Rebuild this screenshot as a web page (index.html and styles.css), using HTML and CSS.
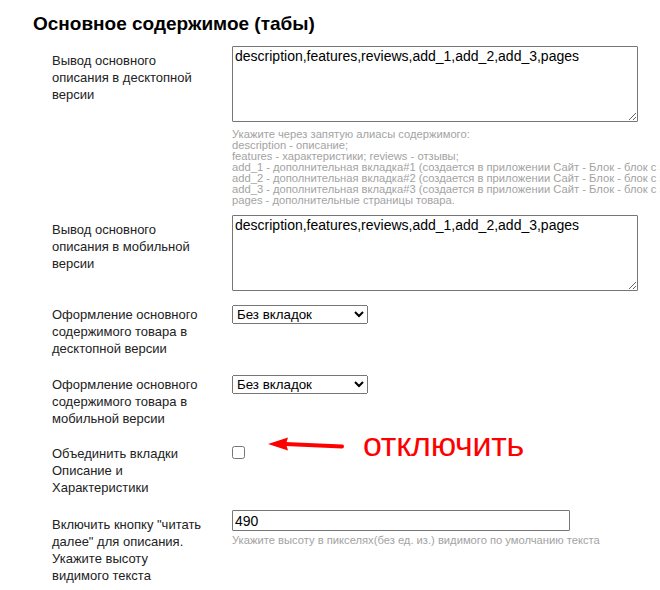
FILE: index.html
```html
<!DOCTYPE html>
<html lang="ru">
  <head>
    <meta charset="UTF-8" />
    <meta name="viewport" content="width=device-width, initial-scale=1.0" />
    <title>Основное содержимое</title>
    <link rel="stylesheet" href="styles.css">
  </head>
  <body>
    <div class="page">
      <h2 class="section-title">Основное содержимое (табы)</h2>

      <div class="settings">
        <div class="row row--hint">
          <div class="row-label row-label--text">Вывод основного описания в десктопной версии</div>
          <div class="row-field">
            <textarea class="field-area">description,features,reviews,add_1,add_2,add_3,pages</textarea>
            <div class="hint">
              Укажите через запятую алиасы содержимого:<br>
              description - описание;<br>
              features - характеристики; reviews - отзывы;<br>
              add_1 - дополнительная вкладка#1 (создается в приложении Сайт - Блок - блок с заданным id);<br>
              add_2 - дополнительная вкладка#2 (создается в приложении Сайт - Блок - блок с заданным id);<br>
              add_3 - дополнительная вкладка#3 (создается в приложении Сайт - Блок - блок с заданным id);<br>
              pages - дополнительные страницы товара.
            </div>
          </div>
        </div>

        <div class="row">
          <div class="row-label row-label--text">Вывод основного описания в мобильной версии</div>
          <div class="row-field">
            <textarea class="field-area">description,features,reviews,add_1,add_2,add_3,pages</textarea>
          </div>
        </div>

        <div class="row row--select">
          <div class="row-label row-label--select">Оформление основного содержимого товара в десктопной версии</div>
          <div class="row-field">
            <select class="field-select">
              <option>Без вкладок</option>
              <option>Вкладки</option>
            </select>
          </div>
        </div>

        <div class="row row--select">
          <div class="row-label row-label--select">Оформление основного содержимого товара в мобильной версии</div>
          <div class="row-field">
            <select class="field-select">
              <option>Без вкладок</option>
              <option>Вкладки</option>
            </select>
          </div>
        </div>

        <div class="row">
          <div class="row-label">Объединить вкладки Описание и Характеристики</div>
          <div class="row-field">
            <input type="checkbox" class="field-check" />
            <!-- пометка поверх скриншота -->
            <div class="annotation">
              <svg class="annotation-arrow" width="80" height="20" viewBox="0 0 80 20">
                <line x1="20" y1="10" x2="77" y2="12.5" stroke="#f00" stroke-width="4" stroke-linecap="round" />
                <polygon points="3,10 23,3.5 21,10 23,16.5" fill="#f00" />
              </svg>
              <span class="annotation-text">отключить</span>
            </div>
          </div>
        </div>

        <div class="row">
          <div class="row-label row-label--text">Включить кнопку "читать далее" для описания. Укажите высоту видимого текста</div>
          <div class="row-field">
            <input type="text" class="field-input" value="490" />
            <div class="hint hint--input">Укажите высоту в пикселях(без ед. из.) видимого по умолчанию текста</div>
          </div>
        </div>
      </div>
    </div>
  </body>
</html>
```

FILE: styles.css
```css
* {
  box-sizing: border-box;
}

html,
body {
  overflow: hidden;
}

body {
  margin: 0;
  font-family: Arial, "Liberation Sans", sans-serif;
  font-size: 13px;
  color: #222;
  background-color: #fff;
}

.page {
  padding: 12px 0 0 33px;
}

.section-title {
  margin: 0 0 11px;
  font-size: 19px;
  line-height: 23px;
  font-weight: bold;
  color: #000;
}

.settings {
  padding-left: 19px;
}

.row {
  display: flex;
  align-items: flex-start;
  padding-bottom: 14px;
}

.row--hint {
  padding-bottom: 9px;
}

.row--select {
  padding-bottom: 18px;
}

.row-label {
  flex-shrink: 0;
  width: 180px;
  padding-right: 24px;
  line-height: 17px;
}

.row-label--text {
  padding-top: 6px;
}

.row-label--select {
  padding-top: 1px;
}

.row-field {
  position: relative;
  flex: 1;
  min-width: 0;
}

.field-area {
  display: block;
  width: 406px;
  height: 76px;
  margin: 0;
  padding: 1px 2px 2px;
  border: 1px solid #767676;
  border-radius: 1px;
  font-family: Arial, "Liberation Sans", sans-serif;
  font-size: 14px;
  color: #000;
  resize: vertical;
}

.hint {
  margin-top: 7px;
  font-size: 11.2px;
  line-height: 11px;
  color: #a3a3a3;
  white-space: nowrap;
}

.hint--input {
  margin-top: 4px;
}

.field-select {
  display: block;
  width: 136px;
  height: 19px;
  margin: 0;
  font-family: Arial, "Liberation Sans", sans-serif;
  font-size: 13.33px;
  color: #000;
}

.field-check {
  display: block;
  width: 13px;
  height: 13px;
  margin: 1px 0 0;
}

.field-input {
  display: block;
  width: 338px;
  height: 21px;
  margin: 0;
  padding: 1px 2px;
  border: 1px solid #767676;
  border-radius: 1px;
  font-family: Arial, "Liberation Sans", sans-serif;
  font-size: 14px;
  color: #000;
}

.annotation {
  position: absolute;
  left: 33px;
  top: -20px;
  display: flex;
  align-items: flex-start;
}

.annotation-arrow {
  display: block;
  margin-top: 9px;
}

.annotation-text {
  margin-left: 18px;
  font-family: "Liberation Sans", Arial, sans-serif;
  font-size: 34px;
  line-height: 38px;
  letter-spacing: -0.3px;
  color: #f00;
}
```
